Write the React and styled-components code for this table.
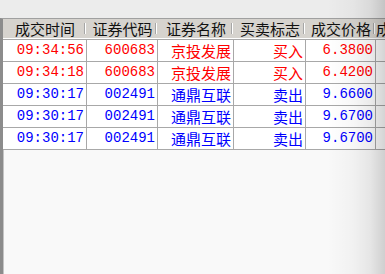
import React from "react";
import styled, { createGlobalStyle } from "styled-components";

const GlobalStyle = createGlobalStyle`
  html, body {
    margin: 0;
    padding: 0;
    overflow: hidden;
    background: #ececec;
  }
`;

const COLS = "84px 71px 76px 72px 70px 60px";

const Frame = styled.div`
  position: relative;
  width: 385px;
  height: 274px;
  display: flex;
  flex-direction: column;
  background: #ececec;
  overflow: hidden;
`;

const TopBar = styled.div`
  height: 18px;
  flex: none;
`;

const Panel = styled.div`
  flex: 1;
  border-top: 1px solid #a0a0a0;
  border-left: 3px solid #8c8c8c;
  box-shadow: inset 1px 0 0 #c4c4c4;
  background: #f9f9f9;
  overflow: hidden;
`;

const HeaderRow = styled.div`
  display: grid;
  grid-template-columns: ${COLS};
  width: 433px;
  height: 19px;
  background: #d6d3ce;
  border-bottom: 1px solid #ffffff;
`;

const HeaderCell = styled.div`
  position: relative;
  display: flex;
  align-items: center;
  justify-content: center;
  font-family: "Noto Sans CJK SC", "Noto Sans", sans-serif;
  font-size: 15px;
  line-height: 19px;
  color: #111;
  white-space: nowrap;
  overflow: hidden;

  &::after {
    content: "";
    position: absolute;
    right: 2px;
    top: 4px;
    height: 11px;
    width: 1px;
    background: #a6a6a6;
    box-shadow: 1px 0 0 #fff;
  }
`;

const Body = styled.div`
  width: 433px;
  border-top: 1px solid #a8a8a8;
`;

const Row = styled.div`
  display: grid;
  grid-template-columns: ${COLS};
  height: 21px;
  border-bottom: 1px solid #a8a8a8;
  background: #ffffff;
  color: ${(p) => (p.$side === "buy" ? "#ff0000" : "#0000ff")};
`;

const Cell = styled.div`
  display: flex;
  align-items: center;
  justify-content: flex-end;
  padding-right: 2px;
  border-right: 1px solid #a8a8a8;
  font-family: ${(p) =>
    p.$cjk
      ? `"Noto Sans CJK SC", sans-serif`
      : `"Liberation Mono", "DejaVu Sans Mono", monospace`};
  font-size: ${(p) => (p.$cjk ? "15px" : "14px")};
  line-height: 21px;
  white-space: nowrap;
  overflow: hidden;
`;

const EdgeShade = styled.div`
  position: absolute;
  top: 0;
  right: 0;
  bottom: 0;
  width: 58px;
  pointer-events: none;
  background: linear-gradient(
    to right,
    rgba(0, 0, 0, 0) 0%,
    rgba(0, 0, 0, 0.03) 45%,
    rgba(0, 0, 0, 0.08) 75%,
    rgba(0, 0, 0, 0.17) 100%
  );
`;

const headers = ["成交时间", "证券代码", "证券名称", "买卖标志", "成交价格", "成交数量"];

const trades = [
  { time: "09:34:56", code: "600683", name: "京投发展", side: "buy", price: "6.3800" },
  { time: "09:34:18", code: "600683", name: "京投发展", side: "buy", price: "6.4200" },
  { time: "09:30:17", code: "002491", name: "通鼎互联", side: "sell", price: "9.6600" },
  { time: "09:30:17", code: "002491", name: "通鼎互联", side: "sell", price: "9.6700" },
  { time: "09:30:17", code: "002491", name: "通鼎互联", side: "sell", price: "9.6700" },
];

export default function App() {
  return (
    <Frame>
      <GlobalStyle />
      <TopBar />
      <Panel>
        <HeaderRow>
          {headers.map((h) => (
            <HeaderCell key={h}>{h}</HeaderCell>
          ))}
        </HeaderRow>
        <Body>
          {trades.map((t, i) => (
            <Row key={i} $side={t.side}>
              <Cell>{t.time}</Cell>
              <Cell>{t.code}</Cell>
              <Cell $cjk>{t.name}</Cell>
              <Cell $cjk>{t.side === "buy" ? "买入" : "卖出"}</Cell>
              <Cell>{t.price}</Cell>
              <Cell />
            </Row>
          ))}
        </Body>
      </Panel>
      <EdgeShade />
    </Frame>
  );
}
